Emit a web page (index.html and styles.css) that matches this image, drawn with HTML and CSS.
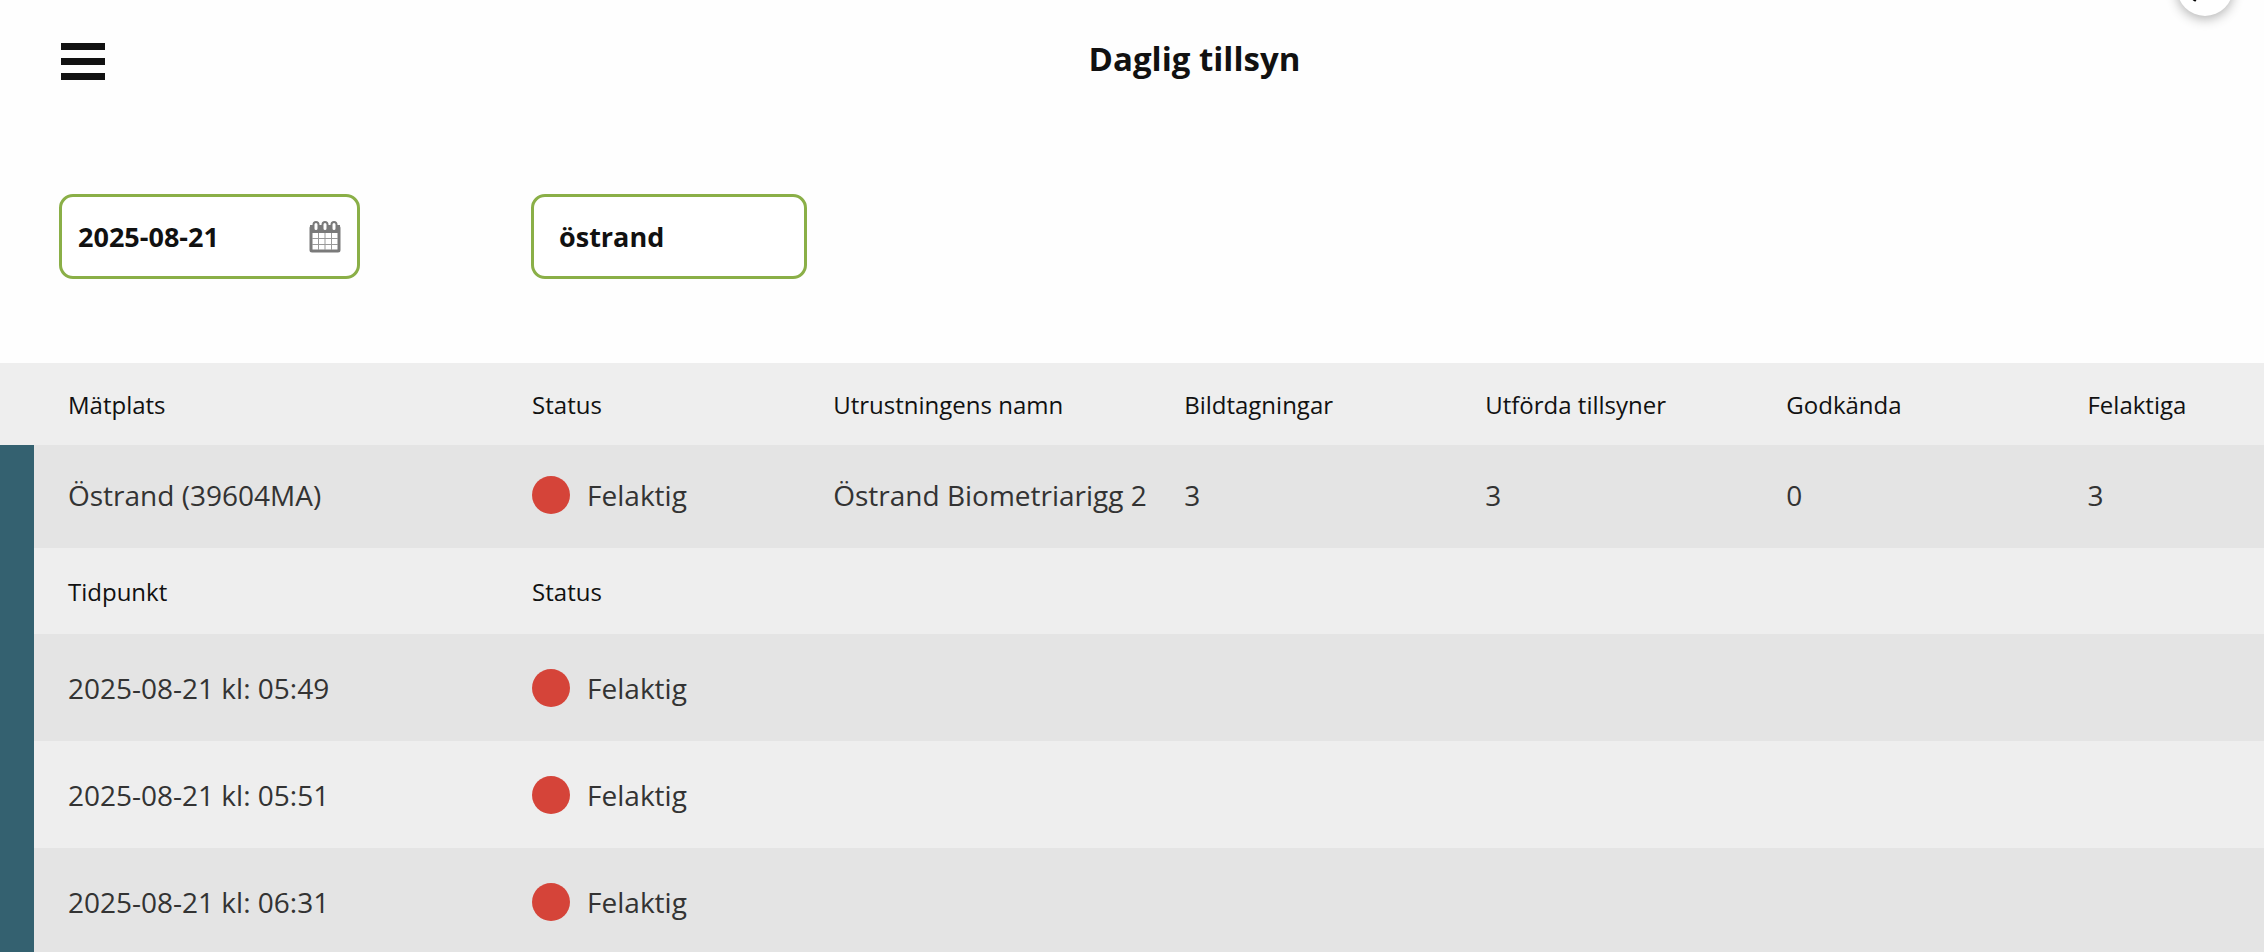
FILE: index.html
```html
<!DOCTYPE html>
<html lang="sv">
<head>
  <meta charset="UTF-8" />
  <meta name="viewport" content="width=device-width, initial-scale=1.0"/>
  <title>Daglig tillsyn</title>
  <link rel="stylesheet" href="styles.css">
</head>
<body>

<header class="topbar">
  <button class="menu-btn" aria-label="Meny">
    <span></span>
    <span></span>
    <span></span>
  </button>
  <h1>Daglig tillsyn</h1>
</header>

<button class="search-btn" aria-label="Sök">
  <svg viewBox="0 0 28 28" width="28" height="28">
    <circle cx="16" cy="11" r="8"/>
    <path d="M10 17 L3 27"/>
  </svg>
</button>

<form class="filters">
  <div class="field date-field">
    <input type="text" id="date" value="2025-08-21" aria-label="Datum">
    <button type="button" class="calendar-btn" aria-label="Välj datum">
      <svg viewBox="0 0 32 32" width="32" height="32">
        <rect class="page" x="2" y="6" width="28" height="24" rx="1"/>
        <path class="top" d="M2 5h28v6H2z"/>
        <path class="lines" d="M3 17.500h26M3 23.500h26M9.500 12v17M16 12v17M22.500 12v17"/>
        <rect class="ring" x="4.500" y="1" width="5" height="9" rx="2.500"/>
        <rect class="ring" x="13.500" y="1" width="5" height="9" rx="2.500"/>
        <rect class="ring" x="22.500" y="1" width="5" height="9" rx="2.500"/>
      </svg>
    </button>
  </div>
  <div class="field place-field">
    <input type="text" id="place" value="östrand" aria-label="Mätplats">
  </div>
</form>

<table class="inspections">
  <colgroup>
    <col class="col-bar">
    <col class="col-place">
    <col class="col-status">
    <col class="col-name">
    <col class="col-count">
    <col class="col-count">
    <col class="col-count">
    <col>
  </colgroup>
  <thead>
    <tr>
      <td></td>
      <th>Mätplats</th>
      <th>Status</th>
      <th>Utrustningens namn</th>
      <th>Bildtagningar</th>
      <th>Utförda tillsyner</th>
      <th>Godkända</th>
      <th>Felaktiga</th>
    </tr>
  </thead>
  <tbody>
    <tr class="place-row">
      <td class="bar" rowspan="5"></td>
      <td>Östrand (39604MA)</td>
      <td><span class="status">Felaktig</span></td>
      <td>Östrand Biometriarigg 2</td>
      <td>3</td>
      <td>3</td>
      <td>0</td>
      <td>3</td>
    </tr>
    <tr class="sub-head">
      <th>Tidpunkt</th>
      <th>Status</th>
      <td colspan="5"></td>
    </tr>
    <tr class="time-row dark">
      <td>2025-08-21 kl: 05:49</td>
      <td><span class="status">Felaktig</span></td>
      <td colspan="5"></td>
    </tr>
    <tr class="time-row">
      <td>2025-08-21 kl: 05:51</td>
      <td><span class="status">Felaktig</span></td>
      <td colspan="5"></td>
    </tr>
    <tr class="time-row dark">
      <td>2025-08-21 kl: 06:31</td>
      <td><span class="status">Felaktig</span></td>
      <td colspan="5"></td>
    </tr>
  </tbody>
</table>

</body>
</html>
```

FILE: styles.css
```css
* {
  box-sizing: border-box;
}

body {
  margin: 0;
  font-family: "Open Sans", sans-serif;
  background: #fefefe;
  color: #111;
  overflow: hidden;
}

button {
  background: none;
  border: none;
  padding: 0;
  cursor: pointer;
}

.topbar {
  display: flex;
  align-items: center;
  height: 122px;
  padding-left: 61px;
}

.menu-btn {
  display: flex;
  flex-direction: column;
  gap: 8px;
  width: 44px;
  margin-right: 20px;
}

.menu-btn span {
  height: 7px;
  background: #111;
}

h1 {
  flex: 1;
  margin: 0;
  padding-bottom: 4px;
  font-size: 33px;
  line-height: 44px;
  text-align: center;
}

.search-btn {
  position: absolute;
  top: -40px;
  right: 31px;
  width: 56px;
  height: 56px;
  display: flex;
  align-items: center;
  justify-content: center;
  border-radius: 50%;
  background: #fff;
  box-shadow: 0 3px 12px rgba(0, 0, 0, 0.3);
}

.search-btn svg {
  fill: none;
  stroke: #000;
  stroke-width: 3;
}

.filters {
  display: flex;
  gap: 171px;
  padding: 72px 59px 84px;
}

.field {
  display: flex;
  align-items: center;
  height: 85px;
  border: 3px solid #8aaf47;
  border-radius: 14px;
  background: #fff;
}

.field input {
  flex: 1;
  min-width: 0;
  border: none;
  outline: none;
  padding: 0;
  background: none;
  color: #111;
  font-family: inherit;
  font-size: 27px;
  font-weight: bold;
}

.date-field {
  width: 301px;
  padding: 0 16px;
}

.place-field {
  width: 276px;
  padding: 0 25px;
}

.calendar-btn {
  display: flex;
}

.calendar-btn svg {
  stroke: #7a7a7a;
  stroke-width: 2;
}

.calendar-btn .page {
  fill: #fff;
  stroke-width: 3;
}

.calendar-btn .top {
  fill: #7a7a7a;
}

.calendar-btn .lines {
  fill: none;
  stroke: #999;
  stroke-width: 1;
}

.calendar-btn .ring {
  fill: #fff;
}

.inspections {
  width: 100%;
  table-layout: fixed;
  border-collapse: collapse;
  background: #eee;
}

.col-bar { width: 34px; }
.col-place { width: 20.5%; }
.col-status { width: 13.3%; }
.col-name { width: 15.5%; }
.col-count { width: 13.3%; }

.inspections th,
.inspections td {
  padding: 0 0 0 34px;
  text-align: left;
  white-space: nowrap;
}

.inspections th {
  font-size: 24px;
  font-weight: normal;
}

.inspections td {
  font-size: 28px;
  color: #333;
}

.inspections thead tr {
  height: 82px;
}

.inspections .bar {
  padding: 0;
  background: #346170;
}

.place-row {
  height: 103px;
  background: #e4e4e4;
}

.inspections .place-row td {
  padding-bottom: 4px;
}

.sub-head {
  height: 86px;
}

.time-row {
  height: 107px;
}

.dark {
  background: #e4e4e4;
}

.status {
  display: flex;
  align-items: center;
  gap: 17px;
}

.status::before {
  content: "";
  width: 38px;
  height: 38px;
  border-radius: 50%;
  background: #d54439;
}
```
